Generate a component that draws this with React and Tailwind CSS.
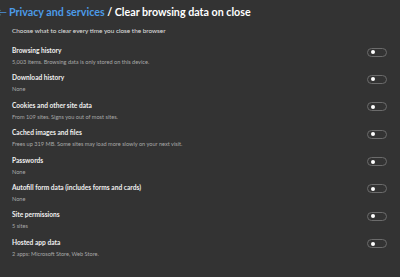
import React from "react";

const items = [
  { title: "Browsing history", desc: "5,003 items. Browsing data is only stored on this device." },
  { title: "Download history", desc: "None" },
  { title: "Cookies and other site data", desc: "From 109 sites. Signs you out of most sites." },
  { title: "Cached images and files", desc: "Frees up 319 MB. Some sites may load more slowly on your next visit." },
  { title: "Passwords", desc: "None" },
  { title: "Autofill form data (includes forms and cards)", desc: "None" },
  { title: "Site permissions", desc: "5 sites" },
  { title: "Hosted app data", desc: "2 apps: Microsoft Store, Web Store." },
];

const Toggle = () => (
  <div className="w-[20px] h-[9px] rounded-full border border-[#6b6b6b] flex items-center pl-[3px] mt-[2.5px]">
    <div className="w-[4px] h-[4px] rounded-full bg-white" />
  </div>
);

export default function App() {
  return (
    <div
      className="w-[400px] h-[277px] bg-[#333333] text-white overflow-hidden"
      style={{ fontFamily: 'Lato, "Open Sans", sans-serif' }}
    >
      <div className="flex items-center h-[24px]">
        <span className="text-[#4c8fd6] text-[10px] w-[12px] -ml-[3px] leading-none">←</span>
        <span className="text-[10.7px] font-bold leading-none">
          <span className="text-[#4c9be8]">Privacy and services</span>
          <span className="text-white"> / Clear browsing data on close</span>
        </span>
      </div>
      <div className="pl-[12px] pt-[2px] text-[6.4px] text-[#e0e0e0] h-[18px]">
        Choose what to clear every time you close the browser
      </div>
      <div className="flex flex-col pt-[3px]">
        {items.map((item) => (
          <div key={item.title} className="flex items-start h-[27.4px] pl-[12px] pr-[13px]">
            <div className="flex-1">
              <div className="text-[6.6px] font-bold text-[#f0f0f0] leading-[11px]">{item.title}</div>
              <div className="text-[5.6px] text-[#a8a8a8] leading-[12px]">{item.desc}</div>
            </div>
            <Toggle />
          </div>
        ))}
      </div>
    </div>
  );
}
